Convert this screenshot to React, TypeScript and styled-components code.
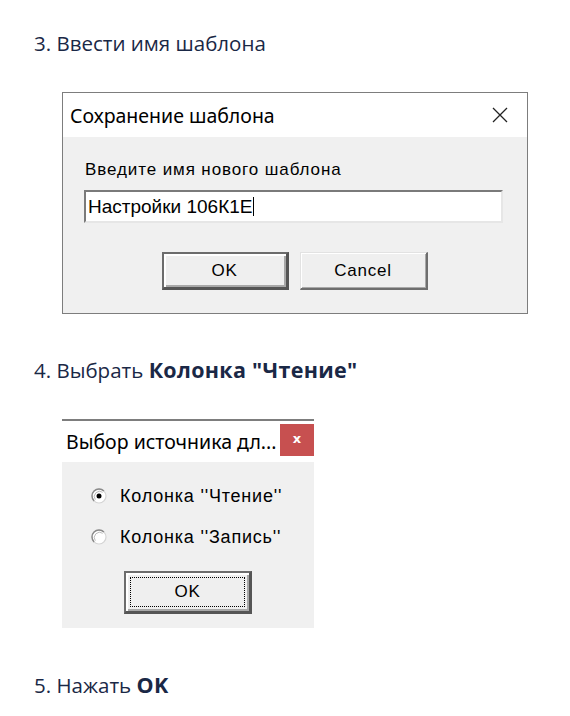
import React from "react";
import styled, { createGlobalStyle } from "styled-components";

const GlobalStyle = createGlobalStyle`
  html, body { margin: 0; padding: 0; background: #ffffff; }
`;

const Page = styled.div`
  width: 570px;
  height: 716px;
  box-sizing: border-box;
  padding: 29px 0 0 34px;
  font-family: "Open Sans", "Noto Sans", sans-serif;
  overflow: hidden;
`;

const Step = styled.p`
  margin: 0;
  font-size: 20.5px;
  line-height: 28px;
  color: #1a2846;
  b { font-weight: 700; font-size: 21.5px; letter-spacing: 0.3px; }
`;

const WinFont = `"Liberation Sans", Arial, sans-serif`;
const TitleFont = `"Noto Sans", "Open Sans", sans-serif`;

const SaveWindow = styled.div`
  margin: 35px 0 42px 28px;
  width: 466px;
  height: 222px;
  box-sizing: border-box;
  border: 1px solid #7d7d7d;
  background: #f0f0f0;
  display: flex;
  flex-direction: column;
`;

const TitleBar = styled.div<{ $h: number }>`
  height: ${(p) => p.$h}px;
  flex: none;
  background: #ffffff;
  display: flex;
  align-items: center;
  justify-content: space-between;
`;

const TitleText = styled.span<{ $pad: number }>`
  padding-left: ${(p) => p.$pad}px;
  font-family: ${TitleFont};
  font-size: 19.5px;
  color: #000;
  white-space: nowrap;
`;

const CloseGlyph = styled.div`
  width: 40px;
  height: 40px;
  margin-right: 7px;
  display: flex;
  align-items: center;
  justify-content: center;
`;

const SaveBody = styled.div`
  padding: 23px 22px 0 21px;
  display: flex;
  flex-direction: column;
`;

const Label = styled.div`
  padding-left: 1px;
  font-family: ${WinFont};
  font-size: 17px;
  letter-spacing: 0.9px;
  line-height: 20px;
  color: #000;
`;

const TextField = styled.div`
  margin-top: 10px;
  width: 419px;
  height: 33px;
  box-sizing: border-box;
  background: #fff;
  border-top: 2px solid #7a7a7a;
  border-left: 2px solid #7a7a7a;
  border-bottom: 2px solid #e6e6e6;
  border-right: 2px solid #e6e6e6;
  display: flex;
  align-items: center;
  padding-left: 2px;
  font-family: ${WinFont};
  font-size: 19px;
  color: #000;
`;

const Caret = styled.span`
  display: inline-block;
  width: 1px;
  height: 19px;
  background: #000;
  margin-left: 1px;
`;

const ButtonRow = styled.div`
  margin-top: 29px;
  display: flex;
  justify-content: center;
  gap: 11px;
`;

const WinButton = styled.div<{ $default?: boolean; $w: number; $h: number }>`
  position: relative;
  width: ${(p) => p.$w}px;
  height: ${(p) => p.$h}px;
  box-sizing: border-box;
  background: #efefef;
  display: flex;
  align-items: center;
  justify-content: center;
  font-family: ${WinFont};
  font-size: 17px;
  letter-spacing: 0.8px;
  color: #000;
  border-style: solid;
  border-width: ${(p) => (p.$default ? "2px 3px 3px 2px" : "1px 2px 2px 1px")};
  border-color: ${(p) =>
    p.$default ? "#6c6c6c #555555 #555555 #6c6c6c" : "#e2e2e2 #6e6e6e #6e6e6e #e2e2e2"};
  box-shadow: ${(p) =>
    p.$default
      ? "inset 2px 2px #ffffff, inset -2px -2px #a8a8a8"
      : "inset 1px 1px #ffffff, inset -1px -1px #a8a8a8"};
`;

const FocusRing = styled.div`
  position: absolute;
  left: 4px;
  top: 4px;
  right: 4px;
  bottom: 4px;
  border: 1px dotted #000;
  display: flex;
  align-items: center;
  justify-content: center;
`;

const SourceWindow = styled.div`
  margin: 35px 0 43px 28px;
  width: 252px;
  height: 209px;
  box-sizing: border-box;
  border-top: 2px solid #7d7d7d;
  background: #f0f0f0;
  display: flex;
  flex-direction: column;
`;

const RedClose = styled.div`
  align-self: flex-start;
  margin-top: 3px;
  width: 34px;
  height: 32px;
  background: #c75050;
  color: #fff;
  font-family: "DejaVu Sans", sans-serif;
  font-weight: 700;
  font-size: 13px;
  display: flex;
  align-items: center;
  justify-content: center;
  padding-bottom: 3px;
  box-sizing: border-box;
`;

const SourceBody = styled.div`
  padding: 23px 0 0 29px;
  display: flex;
  flex-direction: column;
  gap: 19px;
`;

const RadioRow = styled.div`
  height: 22px;
  display: flex;
  align-items: center;
  gap: 13px;
  font-family: ${WinFont};
  font-size: 18px;
  letter-spacing: 0.8px;
  color: #000;
`;

const CenterRow = styled.div`
  margin-top: 4px;
  margin-left: 33px;
  display: flex;
`;

const Radio = ({ checked }: { checked?: boolean }) => (
  <svg width="16" height="16" viewBox="0 0 16 16">
    <circle cx="8" cy="8" r="7" fill="#fff" stroke="#d4d4d4" strokeWidth="1.2" />
    <path d="M3.05 12.95 A7 7 0 0 1 12.95 3.05" fill="none" stroke="#8a8a8a" strokeWidth="1.4" />
    <path d="M4.3 11.7 A5.3 5.3 0 0 1 11.7 4.3" fill="none" stroke="#bdbdbd" strokeWidth="1" />
    {checked && <circle cx="8" cy="8" r="2.5" fill="#000" />}
  </svg>
);

export default function App() {
  return (
    <>
      <GlobalStyle />
      <Page>
        <Step>3. Ввести имя шаблона</Step>
        <SaveWindow>
          <TitleBar $h={44}>
            <TitleText $pad={7}>Сохранение шаблона</TitleText>
            <CloseGlyph>
              <svg width="16" height="16" viewBox="0 0 16 16">
                <path d="M1 1 L15 15 M15 1 L1 15" stroke="#222" strokeWidth="1.3" fill="none" />
              </svg>
            </CloseGlyph>
          </TitleBar>
          <SaveBody>
            <Label>Введите имя нового шаблона</Label>
            <TextField>
              Настройки 106К1Е<Caret />
            </TextField>
            <ButtonRow>
              <WinButton $default $w={127} $h={38}>OK</WinButton>
              <WinButton $w={128} $h={38}>Cancel</WinButton>
            </ButtonRow>
          </SaveBody>
        </SaveWindow>

        <Step>
          4. Выбрать <b>Колонка "Чтение"</b>
        </Step>
        <SourceWindow>
          <TitleBar $h={41}>
            <TitleText $pad={4}>Выбор источника дл...</TitleText>
            <RedClose>x</RedClose>
          </TitleBar>
          <SourceBody>
            <RadioRow>
              <Radio checked />
              Колонка ''Чтение''
            </RadioRow>
            <RadioRow>
              <Radio />
              Колонка ''Запись''
            </RadioRow>
            <CenterRow>
              <WinButton $default $w={128} $h={43}>
                <FocusRing>OK</FocusRing>
              </WinButton>
            </CenterRow>
          </SourceBody>
        </SourceWindow>

        <Step>
          5. Нажать <b>OK</b>
        </Step>
      </Page>
    </>
  );
}
